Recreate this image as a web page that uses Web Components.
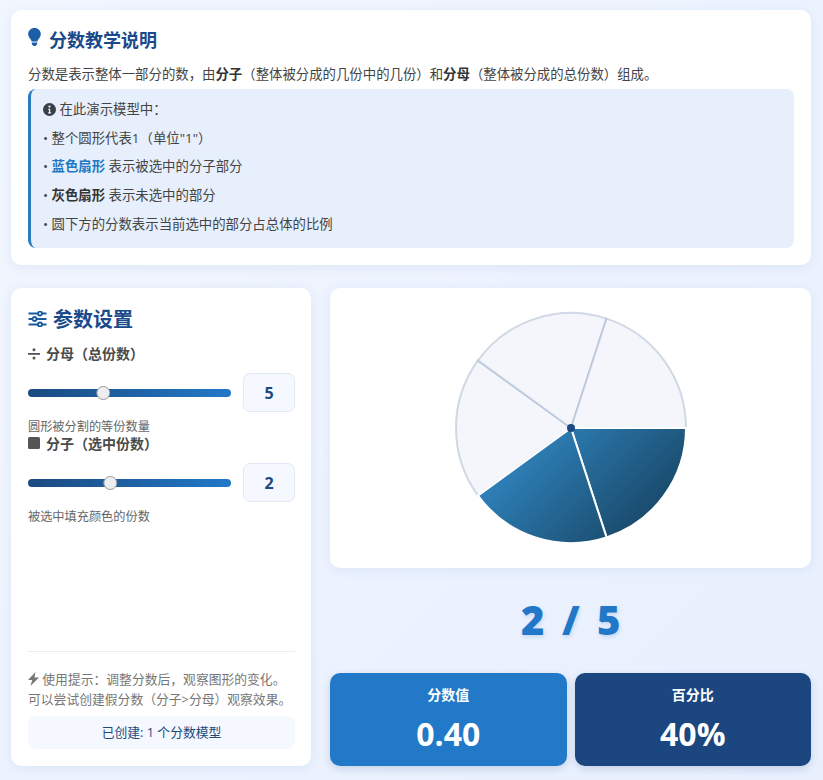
<!DOCTYPE html>
<html lang="zh">
<head>
<meta charset="utf-8">
<title>分数教学</title>
<style>
    html, body { margin: 0; height: 100%; }
    body {
        background: linear-gradient(135deg, #f2f6fe, #e8f0fe);
        font-family: "Open Sans", "Noto Sans CJK SC", sans-serif;
        color: #444;
        overflow: hidden;
    }
</style>
</head>
<body>
<fraction-app></fraction-app>

<template id="info-card-tpl">
    <style>
        :host { display: block; background: #fff; border-radius: 10px; padding: 16px 17px 17px; box-shadow: 0 2px 12px rgba(30, 80, 160, .08); }
        h2 { margin: 0 0 12px; display: flex; align-items: center; gap: 8px; height: 26px; font-size: 18px; font-weight: 700; color: #1a4a8a; }
        svg { width: 13px; height: 18px; fill: #1a5fa8; margin-top: -4px; }
        p { margin: 0 0 5px; font-size: 13.4px; line-height: 20px; color: #444; white-space: nowrap; }
        b { color: #333; }
        .box { background: #e7effc; border-left: 3px solid #2a7bc0; border-radius: 8px; padding: 6px 12px 10px; font-size: 13.4px; color: #444; }
        .box div { height: 28.7px; line-height: 28.7px; white-space: pre; }
        .box svg { width: 13px; height: 13px; fill: #3a3f47; vertical-align: -2px; margin: 0; }
        .blue { color: #1f78c4; }
    </style>
    <h2>
        <svg viewBox="0 0 14 20"><path d="M7 0C3 0 0 3 0 6.800c0 1.800.7 3.300 1.800 4.600.8.9 1.700 2.200 2 3.600h6.400c.3-1.400 1.200-2.700 2-3.600C13.300 10.100 14 8.600 14 6.800 14 3 11 0 7 0z"/><path d="M4 16h6v1.500c0 .4-.2.8-.5 1L8.700 19.500c-.2.300-.5.500-.9.500H6.200c-.4 0-.7-.2-.9-.5l-.8-1c-.3-.2-.5-.6-.5-1z"/></svg>
        分数教学说明
    </h2>
    <p>分数是表示整体一部分的数，由<b>分子</b>（整体被分成的几份中的几份）和<b>分母</b>（整体被分成的总份数）组成。</p>
    <div class="box">
        <div><svg viewBox="0 0 16 16"><path fill-rule="evenodd" d="M8 0a8 8 0 100 16A8 8 0 008 0zM8 3a1.400 1.400 0 110 2.800A1.400 1.400 0 018 3zM6.300 7h2.600v4.500h1v1.300H6.300v-1.300h1V8.300h-1z"/></svg> 在此演示模型中：</div>
        <div>• 整个圆形代表1（单位"1"）</div>
        <div>• <b class="blue">蓝色扇形</b> 表示被选中的分子部分</div>
        <div>• <b>灰色扇形</b> 表示未选中的部分</div>
        <div>• 圆下方的分数表示当前选中的部分占总体的比例</div>
    </div>
</template>

<template id="param-slider-tpl">
    <style>
        :host { display: block; }
        label { display: flex; align-items: center; gap: 6px; font-size: 14px; font-weight: 700; color: #4a4a4a; height: 18px; line-height: 18px; white-space: nowrap; }
        ::slotted(svg) { width: 12px; height: 14px; }
        .row { display: flex; align-items: center; gap: 12px; margin-top: 10px; }
        input {
            -webkit-appearance: none; appearance: none; flex: 1; min-width: 0; margin: 0; height: 8px; border-radius: 4px;
            background: linear-gradient(90deg, #1a4a80, #2278c8); outline: none;
        }
        input::-webkit-slider-thumb {
            -webkit-appearance: none; width: 14px; height: 14px; border-radius: 50%;
            background: #eceef2; border: 1px solid #999; box-sizing: border-box; transform: translateX(-.7px);
        }
        output {
            width: 52px; height: 39px; box-sizing: border-box; flex: none; display: flex; align-items: center; justify-content: center;
            background: #f6f8ff; border: 1px solid #e2e8f5; border-radius: 7px;
            font-size: 16px; font-weight: 700; color: #1a4a80;
        }
        small { display: block; margin-top: 7px; font-size: 12.2px; line-height: 16px; color: #666; white-space: nowrap; }
    </style>
    <label><slot name="icon"></slot><span id="label"></span></label>
    <div class="row">
        <input type="range">
        <output></output>
    </div>
    <small id="hint"></small>
</template>

<template id="pie-chart-tpl">
    <style>
        :host { display: flex; justify-content: center; align-items: center; height: 280px; background: #fff; border-radius: 10px; box-shadow: 0 2px 12px rgba(30, 80, 160, .08); }
        svg { width: 240px; height: 240px; display: block; }
    </style>
    <svg viewBox="0 0 240 240"></svg>
</template>

<template id="stat-card-tpl">
    <style>
        :host { display: block; flex: 1; height: 93px; box-sizing: border-box; padding-top: 13px; border-radius: 10px; color: #fff; text-align: center; background: var(--bg); box-shadow: 0 3px 8px rgba(30, 70, 130, .18); }
        .l { font-size: 14px; font-weight: 700; line-height: 18px; }
        .v { font-size: 32px; font-weight: 700; line-height: 40px; margin-top: 10px; }
    </style>
    <div class="l"><slot name="label"></slot></div>
    <div class="v"><slot name="value"></slot></div>
</template>

<template id="fraction-app-tpl">
    <style>
        :host { display: block; padding: 10px 12px 0 11px; }
        .grid { display: grid; grid-template-columns: 300px 1fr; gap: 19px; margin-top: 23px; height: 478px; }
        .panel { background: #fff; border-radius: 10px; padding: 16px 16px 17px 17px; box-sizing: border-box; display: flex; flex-direction: column; box-shadow: 0 2px 12px rgba(30, 80, 160, .08); }
        h2 { margin: 0 0 12px; display: flex; align-items: center; gap: 6px; height: 29px; font-size: 20px; font-weight: 700; color: #1a4a8a; }
        h2 svg { width: 19px; height: 16px; stroke: #1a5a9e; fill: none; stroke-width: 1.8; }
        .foot { margin-top: auto; border-top: 1px solid #e8ecf3; padding-top: 17px; }
        .tip { font-size: 12.8px; line-height: 20px; color: #777; white-space: nowrap; }
        .tip svg { width: 11px; height: 14px; fill: #777; vertical-align: -2px; }
        .count { margin-top: 7px; height: 33px; line-height: 33px; text-align: center; background: #f5f8ff; border-radius: 8px; font-size: 12.8px; color: #1a4a80; }
        .right { display: flex; flex-direction: column; min-width: 0; }
        .frac { height: 103px; padding: 0 0 2px 2px; display: flex; align-items: center; justify-content: center; font-size: 40px; font-weight: 800; letter-spacing: 1.500px; color: #2278c8; text-shadow: 1px 2px 4px rgba(30, 90, 170, .18); white-space: pre; word-spacing: 4px; }
        .stats { display: flex; gap: 8px; }
        stat-card.a { --bg: #2279c8; }
        stat-card.b { --bg: #1b4680; }
    </style>
    <info-card></info-card>
    <div class="grid">
        <section class="panel">
            <h2>
                <svg viewBox="0 0 18 16"><path d="M0 2.500h18M0 8h18M0 13.500h18"/><g fill="#fff"><circle cx="11.500" cy="2.500" r="2"/><circle cx="6" cy="8" r="2"/><circle cx="11.500" cy="13.500" r="2"/></g></svg>
                参数设置
            </h2>
            <param-slider id="den" label="分母（总份数）" hint="圆形被分割的等份数量" min="1" max="12" value="5">
                <svg slot="icon" viewBox="0 0 12 14" fill="#555"><rect x="0" y="6" width="12" height="1.800"/><circle cx="6" cy="2.800" r="1.500"/><circle cx="6" cy="11" r="1.500"/></svg>
            </param-slider>
            <param-slider id="num" label="分子（选中份数）" hint="被选中填充颜色的份数" min="0" max="5" value="2">
                <svg slot="icon" viewBox="0 0 12 14" fill="#555"><rect x="0" y="0" width="12" height="12" rx="1.500"/></svg>
            </param-slider>
            <div class="foot">
                <div class="tip"><svg viewBox="0 0 11 14"><path d="M7.500 0L0 8h4.200L2.500 14 11 5.500H6.500z"/></svg> 使用提示：调整分数后，观察图形的变化。<br>可以尝试创建假分数（分子&gt;分母）观察效果。</div>
                <div class="count">已创建: 1 个分数模型</div>
            </div>
        </section>
        <div class="right">
            <pie-chart numerator="2" denominator="5"></pie-chart>
            <div class="frac" id="frac">2 / 5</div>
            <div class="stats">
                <stat-card class="a"><span slot="label">分数值</span><span slot="value" id="dec">0.40</span></stat-card>
                <stat-card class="b"><span slot="label">百分比</span><span slot="value" id="pct">40%</span></stat-card>
            </div>
        </div>
    </div>
</template>

<script>
(function () {

    function fromTemplate(el, id) {
        const shadow = el.attachShadow({ mode: 'open' });
        shadow.appendChild(document.getElementById(id).content.cloneNode(true));
        return shadow;
    }

    class InfoCard extends HTMLElement {
        constructor() {
            super();
            fromTemplate(this, 'info-card-tpl');
        }
    }

    class ParamSlider extends HTMLElement {
        constructor() {
            super();
            fromTemplate(this, 'param-slider-tpl');
        }

        connectedCallback() {
            const root = this.shadowRoot;
            this.input = root.querySelector('input');
            this.output = root.querySelector('output');
            root.getElementById('label').textContent = this.getAttribute('label');
            root.getElementById('hint').textContent = this.getAttribute('hint');
            this.input.min = this.getAttribute('min');
            this.input.max = this.getAttribute('max');
            this.input.value = this.getAttribute('value');
            this.output.textContent = this.input.value;
            this.input.addEventListener('input', () => {
                this.output.textContent = this.input.value;
                this.dispatchEvent(new CustomEvent('change-value', { bubbles: true, composed: true }));
            });
        }

        get value() {
            return parseInt(this.input.value);
        }
    }

    class PieChart extends HTMLElement {
        static get observedAttributes() { return ['numerator', 'denominator']; }

        constructor() {
            super();
            fromTemplate(this, 'pie-chart-tpl');
        }

        connectedCallback() { this.draw(); }
        attributeChangedCallback() { this.draw(); }

        draw() {
            const svg = this.shadowRoot.querySelector('svg');
            const n = parseInt(this.getAttribute('numerator'));
            const d = parseInt(this.getAttribute('denominator'));
            const c = 120, r = 115;
            const sector = (i) => {
                const a0 = i / d * 2 * Math.PI, a1 = (i + 1) / d * 2 * Math.PI;
                const x0 = c + r * Math.cos(a0), y0 = c + r * Math.sin(a0);
                const x1 = c + r * Math.cos(a1), y1 = c + r * Math.sin(a1);
                if (d == 1) return `M${c - r} ${c}a${r} ${r} 0 1 0 ${2 * r} 0a${r} ${r} 0 1 0 ${-2 * r} 0z`;
                return `M${c} ${c}L${x0} ${y0}A${r} ${r} 0 ${1 / d > .5 ? 1 : 0} 1 ${x1} ${y1}Z`;
            };
            let grey = '', blue = '';
            for (let i = 0; i < d; i++) {
                if (i < n) {
                    blue += `<path d="${sector(i)}" fill="url(#fill)" stroke="#fff" stroke-width="2"/>`;
                } else {
                    grey += `<path d="${sector(i)}" fill="#f4f6fb" stroke="#8ea4c4" stroke-opacity=".4" stroke-width="2"/>`;
                }
            }
            svg.innerHTML = `<defs><linearGradient id="fill" gradientUnits="userSpaceOnUse" x1="36" y1="179" x2="129" y2="272">
                <stop offset="0" stop-color="#2e80b8"/><stop offset="1" stop-color="#1a4c6e"/></linearGradient></defs>
                ${grey}${blue}<circle cx="${c}" cy="${c}" r="4" fill="#1a4a80"/>`;
        }
    }

    class StatCard extends HTMLElement {
        constructor() {
            super();
            fromTemplate(this, 'stat-card-tpl');
        }
    }

    class FractionApp extends HTMLElement {
        constructor() {
            super();
            fromTemplate(this, 'fraction-app-tpl');
        }

        connectedCallback() {
            this.shadowRoot.addEventListener('change-value', this.update.bind(this));
        }

        update() {
            const root = this.shadowRoot;
            const n = root.getElementById('num').value;
            const d = root.getElementById('den').value;
            const pie = root.querySelector('pie-chart');
            pie.setAttribute('numerator', n);
            pie.setAttribute('denominator', d);
            root.getElementById('frac').textContent = `${n} / ${d}`;
            root.getElementById('dec').textContent = (n / d).toFixed(2);
            root.getElementById('pct').textContent = `${Math.round(n / d * 100)}%`;
        }
    }

    customElements.define('info-card', InfoCard);
    customElements.define('param-slider', ParamSlider);
    customElements.define('pie-chart', PieChart);
    customElements.define('stat-card', StatCard);
    customElements.define('fraction-app', FractionApp);
})();
</script>
</body>
</html>
